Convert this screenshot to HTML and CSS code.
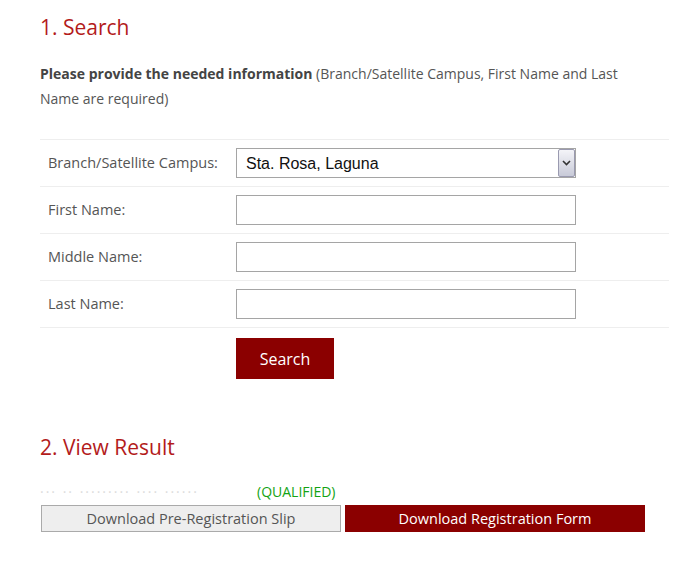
FILE: index.html
```html
<!DOCTYPE html>
<html>
<head>
<meta charset="utf-8">
<link rel="stylesheet" href="styles.css">
</head>
<body>
<div class="page">
  <h2 class="title">1. Search</h2>
  <p class="intro"><strong>Please provide the needed information</strong> (Branch/Satellite Campus, First Name and Last Name are required)</p>
  <table class="form">
    <tr>
      <td class="lbl">Branch/Satellite Campus:</td>
      <td class="fld">
        <div class="sel-wrap">
          <select class="sel"><option>Sta. Rosa, Laguna</option></select>
          <span class="sel-btn"><svg width="9" height="6" viewBox="0 0 9 6"><path d="M1 1 L4.5 4.5 L8 1" fill="none" stroke="#333" stroke-width="1.6"/></svg></span>
        </div>
      </td>
    </tr>
    <tr>
      <td class="lbl">First Name:</td>
      <td class="fld"><input class="txt" type="text" value=""></td>
    </tr>
    <tr>
      <td class="lbl">Middle Name:</td>
      <td class="fld"><input class="txt" type="text" value=""></td>
    </tr>
    <tr>
      <td class="lbl">Last Name:</td>
      <td class="fld"><input class="txt" type="text" value=""></td>
    </tr>
    <tr>
      <td class="lbl"></td>
      <td class="fld btn-cell"><button class="search">Search</button></td>
    </tr>
  </table>
  <h2 class="title title2">2. View Result</h2>
  <div class="result"><span class="hidden-name">··· ·· ········· ···· ······</span><span class="qual">(QUALIFIED)</span></div>
  <div class="dl-row">
    <button class="dl dl-gray">Download Pre-Registration Slip</button>
    <button class="dl dl-red">Download Registration Form</button>
  </div>
</div>
</body>
</html>
```
FILE: styles.css
```css
html, body { margin: 0; padding: 0; background: #fff; }
body { font-family: "Open Sans", sans-serif; color: #555; font-size: 14px; }
.page { padding: 0 14px 0 40px; width: 629px; }
.title {
  margin: 0;
  padding-top: 12px;
  font-size: 21px;
  font-weight: 400;
  line-height: 30px;
  color: #b31b1b;
}
.intro { margin: 19px 0 0 0; line-height: 25px; width: 600px; }
.intro strong { color: #444; font-weight: 700; }
.form { width: 629px; border-collapse: collapse; margin-top: 28px; table-layout: fixed; }
.form td { border-top: 1px solid #eee; padding: 8px; vertical-align: middle; }
.form .lbl { width: 172px; padding-bottom: 10px; font-size: 14.5px; }
.fld { height: 30px; }
.sel-wrap { position: relative; width: 340px; height: 30px; }
.sel {
  appearance: none;
  -webkit-appearance: none;
  width: 340px; height: 30px;
  border: 1px solid #a5a5a5;
  background: #fff;
  font-family: "Liberation Sans", Arial, sans-serif;
  font-size: 16px;
  color: #111;
  padding: 0 0 0 9px;
  margin: 0;
  border-radius: 0;
}
.sel-btn {
  position: absolute; right: 1px; top: 1px;
  width: 17px; height: 28px;
  border: 1px solid #9a9ab0;
  border-radius: 2px;
  background: linear-gradient(#f4f4f8, #c8cad8);
  display: flex; align-items: center; justify-content: center;
  box-sizing: border-box;
}
.txt {
  box-sizing: border-box;
  width: 340px; height: 30px;
  border: 1px solid #a5a5a5;
  margin: 0; padding: 0 6px;
  font-size: 14px;
}
.btn-cell { padding-top: 10px !important; }
.search {
  background: #8b0000; color: #fff; border: 0;
  width: 98px; height: 41px;
  font-family: "Open Sans", sans-serif; font-size: 16px;
  padding: 0; margin: 0;
}
.title2 { padding-top: 45px; }
.result { margin-top: 20px; line-height: 20px; font-size: 14px; white-space: nowrap; }
.hidden-name { display: inline-block; width: 217px; color: #dcdcdc; letter-spacing: 2px; }
.qual { color: #13a313; }
.dl-row { display: flex; gap: 4px; margin-top: 3px; }
.dl {
  width: 300px; height: 27px; margin: 0; padding: 0;
  font-family: "Open Sans", sans-serif; font-size: 14.5px;
}
.dl-gray { background: #eee; border: 1px solid #aaa; color: #555; margin-left: 1px; }
.dl-red { background: #8b0000; border: 0; color: #fff; }
```
